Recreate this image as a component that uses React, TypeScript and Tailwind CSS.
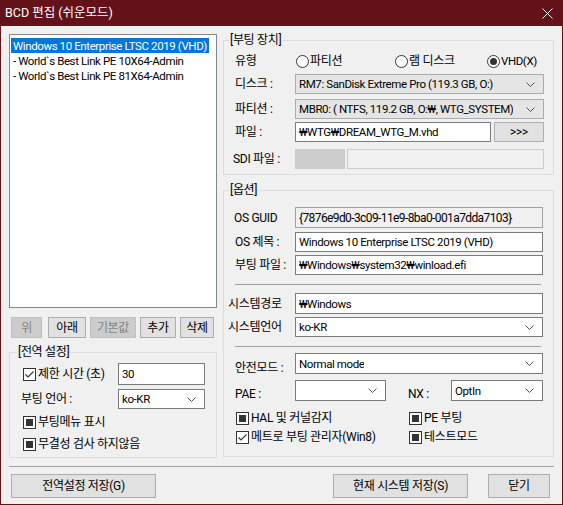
import React from "react";

const Chevron = () => (
  <svg width="9" height="5" viewBox="0 0 9 5" className="shrink-0">
    <path d="M0.5 0.5L4.5 4.5L8.5 0.5" fill="none" stroke="#505050" strokeWidth="1" />
  </svg>
);

function Combo({ text, white, className }: { text: string; white?: boolean; className?: string }) {
  return (
    <div
      className={`flex items-center justify-between pl-[3px] pr-[8px] border ${
        white ? "bg-white border-[#7a7a7a]" : "bg-[#e5e5e5] border-[#acacac]"
      } ${className ?? ""}`}
    >
      <span className="whitespace-nowrap overflow-hidden text-[11.5px] tracking-[-0.4px]">{text}</span>
      <Chevron />
    </div>
  );
}

function TextBox({ text, className }: { text: string; className?: string }) {
  return (
    <div
      className={`flex items-center pl-[3px] border border-[#7a7a7a] bg-white whitespace-nowrap text-[11.5px] tracking-[-0.4px] ${
        className ?? ""
      }`}
    >
      {text}
    </div>
  );
}

function Check({ state }: { state: "checked" | "ind" }) {
  return (
    <span className="w-[13px] h-[13px] border border-[#333333] bg-white flex items-center justify-center shrink-0">
      {state === "checked" ? (
        <svg width="11" height="11" viewBox="0 0 11 11">
          <path d="M1.5 5.5L4 8L9.5 2.5" fill="none" stroke="#333333" strokeWidth="1.1" />
        </svg>
      ) : (
        <span className="w-[7px] h-[7px] bg-[#333333]" />
      )}
    </span>
  );
}

function Radio({ checked }: { checked?: boolean }) {
  return (
    <span className="w-[13px] h-[13px] rounded-full border border-[#333333] bg-white flex items-center justify-center shrink-0">
      {checked && <span className="w-[7px] h-[7px] rounded-full bg-[#333333]" />}
    </span>
  );
}

function Btn({ text, disabled, className }: { text: string; disabled?: boolean; className?: string }) {
  return (
    <div
      className={`flex items-center justify-center border ${
        disabled ? "bg-[#cccccc] border-[#bfbfbf] text-[#838383]" : "bg-[#e1e1e1] border-[#adadad]"
      } ${className ?? ""}`}
    >
      {text}
    </div>
  );
}

function Group({
  label,
  labelLeft,
  className,
  children,
}: {
  label: string;
  labelLeft: string;
  className?: string;
  children: React.ReactNode;
}) {
  return (
    <div className={`relative border border-[#dcdcdc] ${className ?? ""}`}>
      <span className={`absolute top-[-9px] ${labelLeft} bg-[#f0f0f0] px-[1px] leading-[16px]`}>{label}</span>
      {children}
    </div>
  );
}

export default function App() {
  return (
    <div className="w-[563px] h-[505px] flex flex-col bg-[#f0f0f0] text-[12px] leading-[16px] tracking-[-0.3px] text-black font-['Roboto','Noto_Sans_CJK_KR',sans-serif] overflow-hidden">
      {/* title bar */}
      <div className="h-[26px] shrink-0 bg-[#65111a] text-white flex items-center justify-between pl-[5px] pr-[10px]">
        <span className="text-[12.5px] tracking-normal">BCD 편집 (쉬운모드)</span>
        <svg width="11" height="11" viewBox="0 0 11 11">
          <path d="M0.5 0.5L10.5 10.5M10.5 0.5L0.5 10.5" stroke="#ffffff" strokeWidth="1" />
        </svg>
      </div>

      <div className="flex-1 flex flex-col border-x border-b border-[#65111a] px-[8px]">
        <div className="flex">
          {/* left column */}
          <div className="w-[208px] flex flex-col pt-[8px]">
            <div className="h-[274px] border border-[#828790] bg-white pt-[3px] pl-[1px] flex flex-col items-start overflow-hidden text-[11.5px] tracking-[-0.4px]">
              <div className="h-[15px] bg-[#0078d7] text-white pl-[2px] pr-[2px] flex items-center whitespace-nowrap">
                Windows 10 Enterprise LTSC 2019 (VHD)
              </div>
              <div className="h-[15px] pl-[2px] flex items-center whitespace-nowrap">- World`s Best Link PE 10X64-Admin</div>
              <div className="h-[15px] pl-[2px] flex items-center whitespace-nowrap">- World`s Best Link PE 81X64-Admin</div>
            </div>
            <div className="flex mt-[9px] h-[21px] pl-[2px]">
              <Btn text="위" disabled className="w-[31px]" />
              <Btn text="아래" className="w-[38px] ml-[6px]" />
              <Btn text="기본값" disabled className="w-[46px] ml-[4px]" />
              <Btn text="추가" className="w-[36px] ml-[4px]" />
              <Btn text="삭제" className="w-[34px] ml-[4px]" />
            </div>
            <Group label="[전역 설정]" labelLeft="left-[7px]" className="mt-[14px] h-[106px]">
              <div className="flex flex-col pt-[10px]">
                <div className="flex items-center h-[22px]">
                  <div className="w-[108px] pl-[13px] flex items-center gap-[2px]">
                    <Check state="checked" />
                    <span className="whitespace-nowrap">제한 시간 (초)</span>
                  </div>
                  <TextBox text="30" className="w-[87px] h-[22px]" />
                </div>
                <div className="flex items-center h-[20px] mt-[4px]">
                  <div className="w-[108px] pl-[11px]">부팅 언어 :</div>
                  <Combo text="ko-KR" white className="w-[87px] h-[20px]" />
                </div>
                <div className="flex items-center h-[16px] mt-[5px] pl-[13px] gap-[2px]">
                  <Check state="ind" />
                  <span>부팅메뉴 표시</span>
                </div>
                <div className="flex items-center h-[16px] mt-[6px] pl-[13px] gap-[2px]">
                  <Check state="ind" />
                  <span>무결성 검사 하지않음</span>
                </div>
              </div>
            </Group>
          </div>

          {/* right column */}
          <div className="w-[331px] ml-[6px] flex flex-col pt-[14px]">
            <Group label="[부팅 장치]" labelLeft="left-[5px]" className="h-[135px]">
              <div className="flex flex-col pt-[10px] pl-[11px] pr-[9px]">
                <div className="flex items-center h-[20px]">
                  <div className="w-[60px]">유형</div>
                  <div className="flex-1 flex items-center pl-[1px]">
                    <div className="w-[99px] flex items-center gap-[1px]">
                      <Radio />
                      <span>파티션</span>
                    </div>
                    <div className="w-[92px] flex items-center gap-[1px]">
                      <Radio />
                      <span>램 디스크</span>
                    </div>
                    <div className="flex items-center gap-[1px]">
                      <Radio checked />
                      <span className="text-[11.5px] tracking-[-0.4px]">VHD(X)</span>
                    </div>
                  </div>
                </div>
                <div className="flex items-center h-[20px] mt-[3px]">
                  <div className="w-[60px]">디스크 :</div>
                  <Combo text="RM7: SanDisk Extreme Pro (119.3 GB, O:)" className="flex-1 h-[20px]" />
                </div>
                <div className="flex items-center h-[20px] mt-[5px]">
                  <div className="w-[60px]">파티션 :</div>
                  <Combo text="MBR0: ( NTFS, 119.2 GB, O:₩, WTG_SYSTEM)" className="flex-1 h-[20px]" />
                </div>
                <div className="flex items-center h-[20px] mt-[3px]">
                  <div className="w-[60px]">파일 :</div>
                  <TextBox text="₩WTG₩DREAM_WTG_M.vhd" className="w-[196px] h-[20px]" />
                  <Btn text=">>>" className="flex-1 h-[20px] ml-[3px]" />
                </div>
                <div className="flex items-center h-[20px] mt-[7px]">
                  <div className="w-[62px] -ml-[2px]">SDI 파일 :</div>
                  <div className="w-[50px] h-[20px] bg-[#cccccc]" />
                  <div className="flex-1 h-[20px] ml-[2px] border border-[#cccccc] bg-[#f0f0f0]" />
                </div>
              </div>
            </Group>

            <Group label="[옵션]" labelLeft="left-[5px]" className="mt-[15px] h-[267px]">
              <div className="flex flex-col pt-[16px] pr-[10px]">
                <div className="flex items-center h-[21px]">
                  <div className="w-[71px] pl-[10px]">OS GUID</div>
                  <div className="flex-1 h-[21px] border border-[#a0a0a0] bg-[#f0f0f0] pl-[3px] flex items-center whitespace-nowrap tracking-[-0.6px]">
                    {"{7876e9d0-3c09-11e9-8ba0-001a7dda7103}"}
                  </div>
                </div>
                <div className="flex items-center h-[20px] mt-[4px]">
                  <div className="w-[71px] pl-[11px]">OS 제목 :</div>
                  <TextBox text="Windows 10 Enterprise LTSC 2019 (VHD)" className="flex-1 h-[20px]" />
                </div>
                <div className="flex items-center h-[20px] mt-[3px]">
                  <div className="w-[71px] pl-[11px]">부팅 파일 :</div>
                  <TextBox text="₩Windows₩system32₩winload.efi" className="flex-1 h-[20px]" />
                </div>
                <div className="h-px bg-[#a0a0a0] mt-[9px] ml-[11px] mr-[2px]" />
                <div className="flex items-center h-[21px] mt-[8px]">
                  <div className="w-[71px] pl-[4px]">시스템경로</div>
                  <TextBox text="₩Windows" className="flex-1 h-[21px]" />
                </div>
                <div className="flex items-center h-[20px] mt-[3px]">
                  <div className="w-[71px] pl-[4px]">시스템언어</div>
                  <Combo text="ko-KR" white className="flex-1 h-[20px]" />
                </div>
                <div className="h-px bg-[#a0a0a0] mt-[9px] ml-[11px] mr-[2px]" />
                <div className="flex items-center h-[21px] mt-[6px]">
                  <div className="w-[71px] pl-[11px] pt-[8px]">안전모드 :</div>
                  <Combo text="Normal mode" white className="flex-1 h-[21px]" />
                </div>
                <div className="flex items-center h-[21px] mt-[6px]">
                  <div className="w-[71px] pl-[11px] pt-[6px]">PAE :</div>
                  <Combo text="" white className="w-[91px] h-[21px]" />
                  <div className="w-[65px] pl-[22px] pt-[6px]">NX :</div>
                  <Combo text="OptIn" white className="flex-1 h-[21px]" />
                </div>
                <div className="flex items-center h-[16px] mt-[9px] pl-[12px]">
                  <div className="w-[173px] flex items-center gap-[2px]">
                    <Check state="ind" />
                    <span>HAL 및 커널감지</span>
                  </div>
                  <div className="flex items-center gap-[2px]">
                    <Check state="ind" />
                    <span>PE 부팅</span>
                  </div>
                </div>
                <div className="flex items-center h-[16px] mt-[3px] pl-[12px]">
                  <div className="w-[173px] flex items-center gap-[2px]">
                    <Check state="checked" />
                    <span>메트로 부팅 관리자(Win8)</span>
                  </div>
                  <div className="flex items-center gap-[2px]">
                    <Check state="ind" />
                    <span>테스트모드</span>
                  </div>
                </div>
              </div>
            </Group>
          </div>
        </div>

        <div className="h-px bg-[#a0a0a0] mt-[8px]" />
        <div className="flex mt-[7px] h-[24px] pl-[2px]">
          <Btn text="전역설정 저장(G)" className="w-[145px] h-[24px]" />
          <Btn text="현재 시스템 저장(S)" className="w-[135px] h-[24px] ml-[177px]" />
          <Btn text="닫기" className="w-[62px] h-[24px] ml-[20px]" />
        </div>
      </div>
    </div>
  );
}
